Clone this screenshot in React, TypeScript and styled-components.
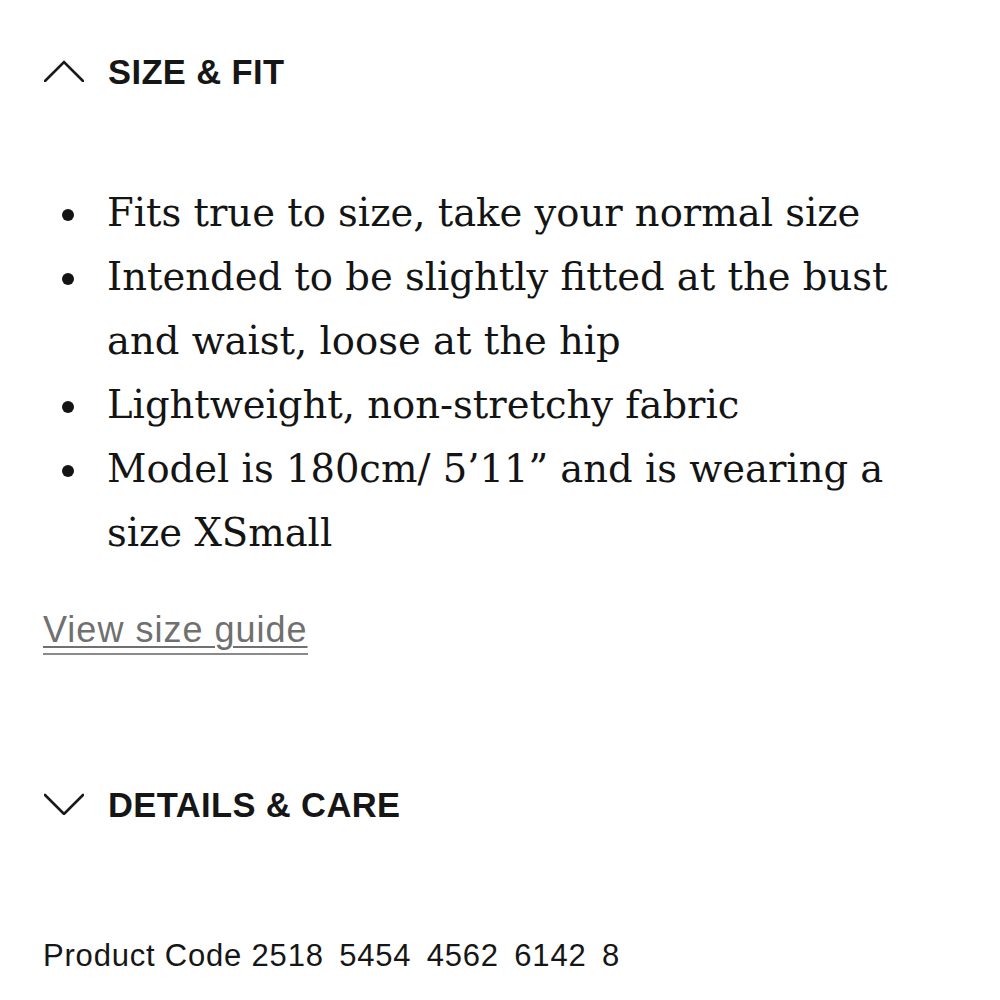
import { createGlobalStyle } from "styled-components";
import styled from "styled-components";

const GlobalStyle = createGlobalStyle`
    body {
        margin: 0;
        background: #ffffff;
    }
`;

const sizeFitPoints: string[][] = [
    ["Fits true to size, take your normal size"],
    ["Intended to be slightly fitted at the bust", "and waist, loose at the hip"],
    ["Lightweight, non-stretchy fabric"],
    ["Model is 180cm/ 5\u201911\u201D and is wearing a", "size XSmall"],
];

const Chevron = ({ open }: { open: boolean }) => (
    <svg width="40" height="22" viewBox="0 0 40 22" fill="none">
        <polyline
            points={open ? "1,21 20,2 39,21" : "1,2 20,21 39,2"}
            stroke="#1a1a1a"
            strokeWidth="2.6"
            strokeLinecap="round"
            strokeLinejoin="miter"
        />
    </svg>
);

const App = () => {
    return (
        <>
            <GlobalStyle />
            <StyledPage>
                <StyledAccordionHeader $top={50}>
                    <Chevron open={true} />
                    <span>SIZE &amp; FIT</span>
                </StyledAccordionHeader>

                <StyledList>
                    {sizeFitPoints.map((lines, i) => (
                        <StyledItem key={i}>
                            <StyledBullet />
                            <div>
                                {lines.map((line, j) => (
                                    <div key={j}>{line}</div>
                                ))}
                            </div>
                        </StyledItem>
                    ))}
                </StyledList>

                <StyledGuideLink href="#">View size guide</StyledGuideLink>

                <StyledAccordionHeader $top={128}>
                    <Chevron open={false} />
                    <span>DETAILS &amp; CARE</span>
                </StyledAccordionHeader>

                <StyledCode>
                    Product Code <StyledDigits>2518 5454 4562 6142 8</StyledDigits>
                </StyledCode>
            </StyledPage>
        </>
    );
};

const StyledPage = styled.div`
    padding: 0 43px;
    color: #141414;
    display: flex;
    flex-direction: column;
    align-items: flex-start;
`;

const StyledAccordionHeader = styled.div<{ $top: number }>`
    margin-top: ${(p) => p.$top}px;
    display: flex;
    align-items: center;
    gap: 24px;
    height: 44px;
    font-family: "Liberation Sans", Arial, sans-serif;
    font-weight: 700;
    font-size: 34.5px;
    letter-spacing: 0.4px;
    color: #161616;

    svg {
        margin-left: 1px;
        margin-top: -2px;
    }
`;

const StyledList = styled.ul`
    list-style: none;
    margin: 87px 0 0 0;
    padding: 0;
    font-family: "DejaVu Serif", "Liberation Serif", serif;
    font-size: 38.5px;
    line-height: 64px;
    color: #141414;
`;

const StyledItem = styled.li`
    display: grid;
    grid-template-columns: 64px 1fr;
`;

const StyledBullet = styled.span`
    width: 12px;
    height: 12px;
    border-radius: 50%;
    background: #141414;
    margin: 28px 0 0 19px;
`;

const StyledGuideLink = styled.a`
    margin-top: 45px;
    font-family: "Liberation Sans", Arial, sans-serif;
    font-size: 36px;
    letter-spacing: 1px;
    line-height: 40px;
    color: #707070;
    text-decoration: underline;
    text-decoration-thickness: 2px;
    text-underline-offset: 4px;
    border-bottom: 2px solid #8a8a8a;
    padding-bottom: 3px;
`;

const StyledCode = styled.div`
    margin-top: 109px;
    font-family: "Liberation Sans", Arial, sans-serif;
    font-size: 31px;
    letter-spacing: 0.8px;
    line-height: 40px;
    color: #161616;
`;

const StyledDigits = styled.span`
    word-spacing: 6px;
`;

export default App;
